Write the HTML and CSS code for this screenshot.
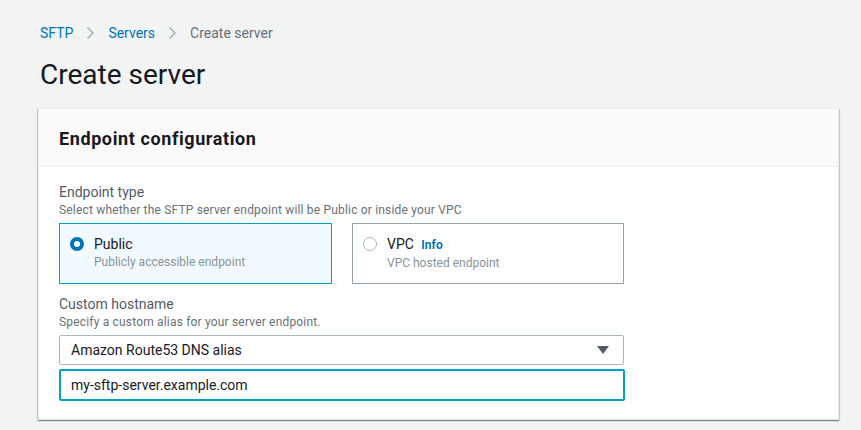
FILE: index.html
```html
<!DOCTYPE html>
<html>
<head>
<meta charset="utf-8">
<link rel="stylesheet" href="styles.css">
</head>
<body>
<nav class="crumbs">
  <a class="crumb-link">SFTP</a>
  <svg class="chev" width="9" height="14" viewBox="0 0 9 14"><path d="M1.5 1.5 L7 7 L1.5 12.5" fill="none" stroke="#aab7b8" stroke-width="1.6"/></svg>
  <a class="crumb-link">Servers</a>
  <svg class="chev" width="9" height="14" viewBox="0 0 9 14"><path d="M1.5 1.5 L7 7 L1.5 12.5" fill="none" stroke="#aab7b8" stroke-width="1.6"/></svg>
  <span class="crumb-current">Create server</span>
</nav>
<h1 class="page-title">Create server</h1>
<section class="card">
  <header class="card-header">
    <h2 class="card-title">Endpoint configuration</h2>
  </header>
  <div class="card-body">
    <div class="field-label">Endpoint type</div>
    <div class="field-desc">Select whether the SFTP server endpoint will be Public or inside your VPC</div>
    <div class="tiles">
      <div class="tile tile-selected">
        <span class="radio radio-on"></span>
        <div class="tile-text">
          <div class="tile-label">Public</div>
          <div class="tile-desc">Publicly accessible endpoint</div>
        </div>
      </div>
      <div class="tile">
        <span class="radio"></span>
        <div class="tile-text">
          <div class="tile-label">VPC <a class="info">Info</a></div>
          <div class="tile-desc">VPC hosted endpoint</div>
        </div>
      </div>
    </div>
    <div class="field-label field-gap">Custom hostname</div>
    <div class="field-desc">Specify a custom alias for your server endpoint.</div>
    <div class="select">
      <span>Amazon Route53 DNS alias</span>
      <svg width="12" height="8" viewBox="0 0 12 8"><path d="M0 0 H12 L6 8 Z" fill="#545b64"/></svg>
    </div>
    <div class="input">my-sftp-server.example.com</div>
  </div>
</section>
</body>
</html>
```
FILE: styles.css
```css
* { box-sizing: border-box; }
body {
  margin: 0;
  background: #f2f3f3;
  font-family: Roboto, "Open Sans", sans-serif;
  color: #16191f;
  width: 861px;
  height: 430px;
  overflow: hidden;
}
.crumbs {
  display: flex;
  align-items: center;
  gap: 13px;
  padding: 23px 0 0 40px;
  height: 43px;
  font-size: 14px;
  line-height: 20px;
}
.crumb-link { color: #0073bb; }
.crumb-current { color: #687078; }
.chev { display: block; }
.page-title {
  margin: 14px 0 0 40px;
  font-size: 28px;
  line-height: 36px;
  font-weight: 400;
  color: #16191f;
}
.card {
  margin: 15px 0 0 38px;
  width: 801px;
  background: #fff;
  border: 1px solid #eaeded;
  box-shadow: 0 1px 1px 0 rgba(0,28,36,.3), 1px 1px 1px 0 rgba(0,28,36,.15), -1px 1px 1px 0 rgba(0,28,36,.15);
}
.card-header {
  background: #fafafa;
  border-bottom: 1px solid #eaeded;
  padding: 18px 20px 15px;
}
.card-title {
  margin: 0;
  font-size: 18px;
  line-height: 24px;
  font-weight: 700;
  letter-spacing: 0.6px;
  color: #16191f;
}
.card-body {
  padding: 15px 20px 18px;
}
.field-label {
  font-size: 14px;
  line-height: 20px;
  color: #545b64;
}
.field-gap { margin-top: 10px; }
.field-desc {
  font-size: 12px;
  line-height: 16px;
  letter-spacing: 0.18px;
  color: #687078;
}
.tiles {
  display: grid;
  grid-template-columns: 273px 272px;
  gap: 20px;
  margin-top: 5px;
}
.tile {
  display: flex;
  align-items: flex-start;
  gap: 10px;
  height: 61px;
  padding: 10px 10px 0;
  border: 1px solid #95a5a6;
}
.tile-selected {
  background: #f1faff;
  border-color: #00a1c9;
}
.radio {
  flex: none;
  width: 14px;
  height: 14px;
  margin-top: 3px;
  border-radius: 50%;
  border: 1px solid #aab7b8;
  background: #fff;
}
.radio-on {
  border: 4px solid #0073bb;
}
.tile-label {
  font-size: 14px;
  line-height: 20px;
  color: #16191f;
}
.info {
  margin-left: 4px;
  font-size: 12px;
  font-weight: 700;
  color: #0073bb;
}
.tile-desc {
  font-size: 12px;
  line-height: 16px;
  color: #879596;
}
.select {
  display: flex;
  align-items: center;
  justify-content: space-between;
  margin-top: 5px;
  width: 565px;
  height: 30px;
  padding: 0 14px 0 11px;
  border: 1px solid #aab7b8;
  border-radius: 2px;
  font-size: 14px;
  color: #16191f;
}
.input {
  display: flex;
  align-items: center;
  margin-top: 4px;
  width: 566px;
  height: 32px;
  padding: 0 10px;
  border: 2px solid #00a1c9;
  border-radius: 2px;
  font-size: 14px;
  color: #16191f;
}
```
